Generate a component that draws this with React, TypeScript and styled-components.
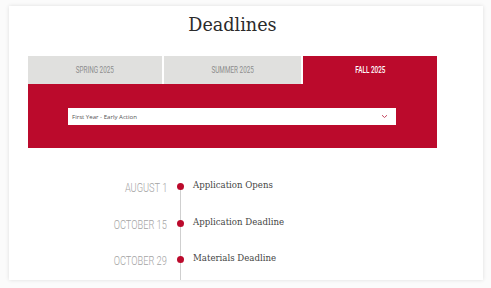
import { useState } from "react";
import styled, { createGlobalStyle } from "styled-components";

const GlobalStyle = createGlobalStyle`
  html, body {
    margin: 0;
    padding: 0;
    background: #fbfbfb;
  }
  body {
    width: 491px;
    height: 288px;
    overflow: hidden;
  }
`;

const RED = "#bb0a2c";
const SERIF = `"DejaVu Serif", "Liberation Serif", serif`;
const NARROW = `Roboto, "Liberation Sans", sans-serif`;

const Card = styled.div`
  margin: 6px 0 0 9px;
  width: 474px;
  height: 274px;
  background: #fff;
  box-shadow: 0 0 4px rgba(0, 0, 0, 0.12);
  overflow: hidden;
`;

const Column = styled.div`
  margin-left: 19px;
  width: 409px;
  display: flex;
  flex-direction: column;
`;

const Title = styled.h1`
  margin: 6px 0 0;
  height: 44px;
  text-align: center;
  font-family: ${SERIF};
  font-weight: 400;
  font-size: 17.6px;
  line-height: 26px;
  color: #2b2b2b;
`;

const Tabs = styled.div`
  display: grid;
  grid-template-columns: 134px 137px 134px;
  column-gap: 2px;
`;

const Tab = styled.button<{ $active?: boolean }>`
  height: 28px;
  border: 0;
  padding: 0;
  background: ${(p) => (p.$active ? RED : "#e0e0de")};
  color: ${(p) => (p.$active ? "#fff" : "#8d8d8d")};
  font-family: ${NARROW};
  font-size: 8.6px;
  font-weight: ${(p) => (p.$active ? 500 : 400)};
  text-transform: uppercase;
  cursor: pointer;
`;

/* Oswald-like condensed look from a regular face */
const Squeeze = styled.span<{ $origin?: string }>`
  display: inline-block;
  transform: scaleX(0.74);
  transform-origin: ${(p) => p.$origin ?? "center"};
  white-space: nowrap;
`;

const Panel = styled.div`
  height: 64px;
  background: ${RED};
  padding: 24px 0 0 40px;
  box-sizing: border-box;
`;

const Select = styled.div`
  width: 328px;
  height: 17px;
  background: #fff;
  display: flex;
  align-items: center;
  justify-content: space-between;
  padding: 0 8px 0 4px;
  box-sizing: border-box;
  font-family: "Open Sans", "Liberation Sans", sans-serif;
  font-size: 6.1px;
  color: #555;
`;

const Timeline = styled.div`
  margin: 30px 0 0 0;
  display: flex;
  flex-direction: column;
  gap: 20.5px;
  position: relative;
`;

const Line = styled.div`
  position: absolute;
  left: 151.5px;
  top: 6px;
  bottom: -40px;
  width: 1.5px;
  background: #cfcfcf;
`;

const Row = styled.div`
  display: grid;
  grid-template-columns: 139px 26px 1fr;
  align-items: center;
  height: 16px;
  position: relative;
`;

const When = styled.div`
  text-align: right;
  font-family: ${NARROW};
  font-weight: 300;
  font-size: 12.5px;
  color: #a3a3a3;
  text-transform: uppercase;
  padding-top: 2px;
`;

const Dot = styled.span`
  justify-self: center;
  width: 7px;
  height: 7px;
  border-radius: 50%;
  background: ${RED};
  position: relative;
  z-index: 1;
`;

const What = styled.div`
  font-family: ${SERIF};
  font-size: 8.6px;
  color: #454545;
  margin-top: -3px;
`;

const terms = ["Spring 2025", "Summer 2025", "Fall 2025"];
const items = [
  ["August 1", "Application Opens"],
  ["October 15", "Application Deadline"],
  ["October 29", "Materials Deadline"],
];

export default function App() {
  const [term, setTerm] = useState(2);
  return (
    <>
      <GlobalStyle />
      <Card>
        <Column>
          <Title>Deadlines</Title>
          <Tabs>
            {terms.map((t, i) => (
              <Tab key={t} $active={i === term} onClick={() => setTerm(i)}>
                <Squeeze>{t}</Squeeze>
              </Tab>
            ))}
          </Tabs>
          <Panel>
            <Select>
              <span>First Year - Early Action</span>
              <svg width="7" height="5" viewBox="0 0 7 5">
                <path d="M1 1.2l2.5 2.3L6 1.2" fill="none" stroke="#c4465f" strokeWidth="1" />
              </svg>
            </Select>
          </Panel>
          <Timeline>
            <Line />
            {items.map(([d, l]) => (
              <Row key={d}>
                <When>
                  <Squeeze $origin="right">{d}</Squeeze>
                </When>
                <Dot />
                <What>{l}</What>
              </Row>
            ))}
          </Timeline>
        </Column>
      </Card>
    </>
  );
}
